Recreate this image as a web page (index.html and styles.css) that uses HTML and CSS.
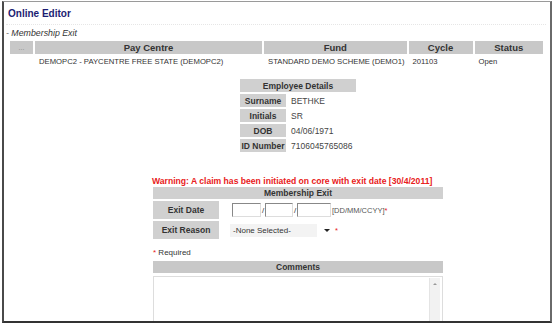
FILE: index.html
```html
<!DOCTYPE html>
<html lang="en">
<head>
  <meta charset="UTF-8">
  <title>Online Editor - Membership Exit</title>
  <link rel="stylesheet" href="styles.css">
</head>
<body>
  <div class="frame">
    <!-- Header -->
    <h1 class="title">Online Editor</h1>
    <p class="crumb">- Membership Exit</p>

    <!-- Member summary -->
    <table class="grid">
      <tr>
        <th class="c-dots">...</th>
        <th class="c-pc">Pay Centre</th>
        <th class="c-fund">Fund</th>
        <th class="c-cycle">Cycle</th>
        <th class="c-status">Status</th>
      </tr>
      <tr>
        <td></td>
        <td>DEMOPC2 - PAYCENTRE FREE STATE (DEMOPC2)</td>
        <td>STANDARD DEMO SCHEME (DEMO1)</td>
        <td>201103</td>
        <td>Open</td>
      </tr>
    </table>

    <div class="panel">
      <!-- Employee details -->
      <table class="details">
        <tr><th colspan="2" class="head">Employee Details</th></tr>
        <tr><th>Surname</th><td>BETHKE</td></tr>
        <tr><th>Initials</th><td>SR</td></tr>
        <tr><th>DOB</th><td>04/06/1971</td></tr>
        <tr><th>ID Number</th><td>7106045765086</td></tr>
      </table>

      <p class="warning">Warning: A claim has been initiated on core with exit date [30/4/2011]</p>

      <!-- Exit form -->
      <table class="exit">
        <tr><th colspan="2" class="head">Membership Exit</th></tr>
        <tr>
          <th>Exit Date</th>
          <td><input type="text" class="dd"><span class="sep">/</span><input type="text" class="mm"><span class="sep">/</span><input type="text" class="yy"><span class="hint">[DD/MM/CCYY]</span><span class="req">*</span></td>
        </tr>
        <tr>
          <th>Exit Reason</th>
          <td><span class="select">-None Selected-<span class="arrow"></span></span> <span class="req">*</span></td>
        </tr>
      </table>

      <p class="required"><span class="req">*</span> Required</p>

      <div class="head comments-head">Comments</div>
      <div class="comments">
        <div class="scroll"><i class="up"></i><i class="down"></i></div>
      </div>
    </div>
  </div>
</body>
</html>
```

FILE: styles.css
```css
body {
  margin: 0;
  font-family: "Liberation Sans", Arial, sans-serif;
  color: #333;
  background: #fff;
}
.frame {
  margin: 1px 1px 0 2px;
  height: 322px;
  border-top: 1px solid #9a9a9a;
  border-left: 2px solid #4a4a4a;
  border-right: 2px solid #6a6a6a;
  border-bottom: 2px solid #333;
  overflow: hidden;
  box-sizing: border-box;
}
.title {
  margin: 0 4px 0 2px;
  padding: 5px 0 4px 2px;
  height: 13px;
  line-height: 13px;
  font-size: 10px;
  color: #1c1c72;
  border-bottom: 1px dotted #e6e6e6;
}
.crumb {
  margin: 3px 0 0 2px;
  height: 11px;
  line-height: 11px;
  font-size: 8.8px;
  font-style: italic;
  color: #333;
}
.grid {
  margin: 0 0 0 4px;
  border-spacing: 2px;
  width: 537px;
}
.grid th {
  background: #c8c8c8;
  height: 13px;
  padding: 0;
  font-size: 9.5px;
  color: #333;
}
.grid th.c-dots {
  width: 23px;
  font-size: 7px;
  font-weight: normal;
  color: #888;
}
.grid th.c-pc { width: 227px; }
.grid th.c-fund { width: 142px; }
.grid th.c-cycle { width: 64px; }
.grid td {
  font-size: 7.7px;
  line-height: 9px;
  padding: 1px 2px 1px 4px;
  white-space: nowrap;
}
.panel {
  margin-left: 149px;
  width: 290px;
}
.head {
  background: #c8c8c8;
  font-size: 8.5px;
  font-weight: bold;
  text-align: center;
  color: #333;
}
.details {
  margin: 8px auto 0;
  border-spacing: 2px;
}
.details th, .details td {
  height: 13px;
  padding: 0 1px;
  font-size: 8.5px;
  white-space: nowrap;
}
.details th {
  background: #d0d0d0;
  text-align: center;
  width: 44px;
}
.details th.head {
  width: auto;
}
.details td {
  width: 64px;
  padding-left: 3px;
  color: #444;
}
.warning {
  margin: 22px 0 0 -1px;
  height: 10px;
  line-height: 10px;
  font-size: 8.6px;
  font-weight: bold;
  color: #e82020;
}
.exit {
  width: 290px;
  margin-top: -1px;
  border-spacing: 0 2px;
}
.exit th.head {
  height: 12px;
  line-height: 12px;
  padding: 0;
}
.exit th {
  background: #d0d0d0;
  width: 66px;
  height: 18px;
  font-size: 8.5px;
  padding: 0;
}
.exit td {
  padding: 0 0 0 13px;
  font-size: 7.5px;
  white-space: nowrap;
}
.exit input {
  height: 14px;
  padding: 0;
  margin: 0;
  border: 1px solid #ddd;
  border-left-color: #888;
  border-top-color: #888;
  vertical-align: middle;
  box-sizing: border-box;
  font-size: 8px;
}
.exit .dd { width: 29px; }
.exit .mm { width: 28px; }
.exit .yy { width: 34px; }
.sep {
  display: inline-block;
  width: 4px;
  font-size: 8px;
  vertical-align: middle;
  text-align: center;
}
.hint {
  color: #555;
  margin-left: 1px;
  vertical-align: middle;
}
.req {
  color: #e82020;
  vertical-align: middle;
}
.select {
  display: inline-block;
  position: relative;
  width: 103px;
  height: 13px;
  line-height: 13px;
  margin-left: -2px;
  font-size: 8px;
  color: #333;
  padding-left: 3px;
  box-sizing: border-box;
  background: linear-gradient(to right, #f3f3f3 0 84%, #fff 84%);
  vertical-align: middle;
}
.arrow {
  position: absolute;
  right: 3px;
  top: 5px;
  border-left: 3px solid transparent;
  border-right: 3px solid transparent;
  border-top: 3px solid #222;
}
.required {
  margin: 7px 0 0;
  height: 10px;
  line-height: 10px;
  font-size: 8px;
  color: #333;
}
.comments-head {
  margin-top: 3px;
  height: 12px;
  line-height: 12px;
}
.comments {
  margin-top: 3px;
  height: 60px;
  border: 1px solid #ddd;
  position: relative;
}
.scroll {
  position: absolute;
  right: 2px;
  top: 1px;
  bottom: 0;
  width: 11px;
  background: #f2f2f2;
  border-left: 1px solid #e4e4e4;
  display: flex;
  flex-direction: column;
  justify-content: space-between;
  align-items: center;
  padding: 5px 0 6px;
  box-sizing: border-box;
}
.scroll i {
  border-left: 2px solid transparent;
  border-right: 2px solid transparent;
}
.scroll .up {
  border-bottom: 2px solid #999;
}
.scroll .down {
  border-top: 2px solid #999;
}
```
